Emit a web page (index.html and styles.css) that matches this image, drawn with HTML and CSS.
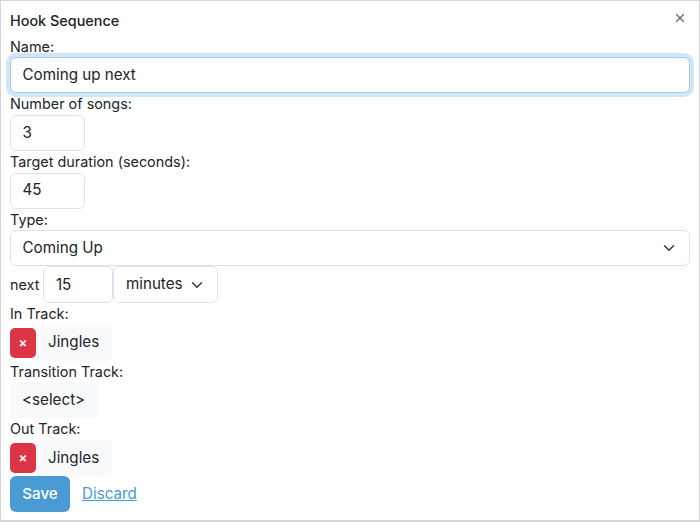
FILE: index.html
```html
<!DOCTYPE html>
<html lang="en">
<head>
  <meta charset="UTF-8" />
  <title>Hook Sequence</title>
  <link rel="stylesheet" href="styles.css">
</head>
<body>
  <div class="dialog">
    <div class="dialog-header">
      <h5>Hook Sequence</h5>
      <button class="close" type="button" aria-label="Close">
        <svg viewBox="0 0 16 16" width="10" height="10"><path d="M2 2L14 14M14 2L2 14" /></svg>
      </button>
    </div>

    <label for="name">Name:</label>
    <input type="text" id="name" class="control focused" value="Coming up next" />

    <label for="songs">Number of songs:</label>
    <input type="text" id="songs" class="control small" value="3" />

    <label for="duration">Target duration (seconds):</label>
    <input type="text" id="duration" class="control small" value="45" />

    <label for="type">Type:</label>
    <select id="type" class="control select">
      <option>Coming Up</option>
    </select>

    <div class="next-row">
      <span class="next-label">next</span>
      <input type="text" class="control tiny" value="15" />
      <select class="control select unit">
        <option>minutes</option>
      </select>
    </div>

    <label>In Track:</label>
    <div class="track-row">
      <button class="remove" type="button">&times;</button>
      <button class="track" type="button">Jingles</button>
    </div>

    <label>Transition Track:</label>
    <div class="track-row">
      <button class="track" type="button">&lt;select&gt;</button>
    </div>

    <label>Out Track:</label>
    <div class="track-row">
      <button class="remove" type="button">&times;</button>
      <button class="track" type="button">Jingles</button>
    </div>

    <div class="actions">
      <button class="save" type="button">Save</button>
      <a href="#" class="discard">Discard</a>
    </div>
  </div>
</body>
</html>
```

FILE: styles.css
```css
* {
  box-sizing: border-box;
}
body {
  margin: 0;
  font-family: Inter, "Liberation Sans", sans-serif;
  font-size: 14.4px;
  line-height: 1.5;
  color: #212529;
  background: #fff;
}
.dialog {
  width: 700px;
  height: 522px;
  padding: 9px;
  border: 1px solid #d4d4d4;
  border-bottom-width: 2px;
}
.dialog-header {
  display: flex;
  justify-content: space-between;
  align-items: flex-start;
  height: 25.8px;
}
h5 {
  margin: 0;
  font-size: 14.4px;
  font-weight: 500;
  line-height: 21.6px;
}
.close {
  padding: 0;
  margin: 3px 5px 0 0;
  border: none;
  background: none;
  line-height: 0;
}
.close path {
  stroke: #5f6469;
  stroke-width: 2;
  fill: none;
}
label {
  display: block;
}
.control {
  display: block;
  width: 100%;
  height: 36px;
  padding: 6px 12px;
  font: inherit;
  font-size: 15.2px;
  color: #212529;
  background: #fff;
  border: 1px solid #dee2e6;
  border-radius: 6px;
  outline: none;
}
input.control {
  padding: 5px 12px 7px 11.5px;
}
.next-row input.control {
  padding: 6px 12px 6px 11.5px;
}
.focused {
  border-color: #a5cdea;
  box-shadow: 0 0 0 4px #d2e6f5;
}
.small {
  width: 75px;
}
.tiny {
  width: 70px;
}
.select {
  appearance: none;
  padding-left: 11.5px;
  padding-right: 24px;
  background-image: url("data:image/svg+xml,%3csvg xmlns='http://www.w3.org/2000/svg' viewBox='0 0 16 16'%3e%3cpath fill='none' stroke='%23343a40' stroke-linecap='round' stroke-linejoin='round' stroke-width='2' d='m2 5 6 6 6-6'/%3e%3c/svg%3e");
  background-repeat: no-repeat;
  background-position: right 12px center;
  background-size: 16px 12px;
}
.unit {
  width: 105px;
}
.next-row {
  display: flex;
  align-items: center;
  height: 37px;
}
.next-label {
  margin-right: 4px;
}
.next-row .control {
  height: 37px;
}
.track-row {
  display: flex;
  align-items: center;
}
.remove {
  width: 26px;
  height: 30px;
  padding: 0;
  font: inherit;
  font-size: 13.3px;
  font-weight: 600;
  color: #fff;
  background: #dc3545;
  border: none;
  border-radius: 5px;
}
.track {
  height: 36px;
  padding: 6px 13px 6px 12px;
  font: inherit;
  font-size: 15.2px;
  color: #212529;
  background: #f8f9fa;
  border: none;
  border-radius: 6px;
}
.actions {
  display: flex;
  align-items: center;
  gap: 12px;
}
.save {
  width: 60px;
  height: 36px;
  padding: 0;
  font: inherit;
  font-size: 15.2px;
  font-weight: 500;
  color: #fff;
  background: #4a9ad4;
  border: none;
  border-radius: 6px;
}
.discard {
  font-size: 15.2px;
  color: #4a9ad4;
}
```
